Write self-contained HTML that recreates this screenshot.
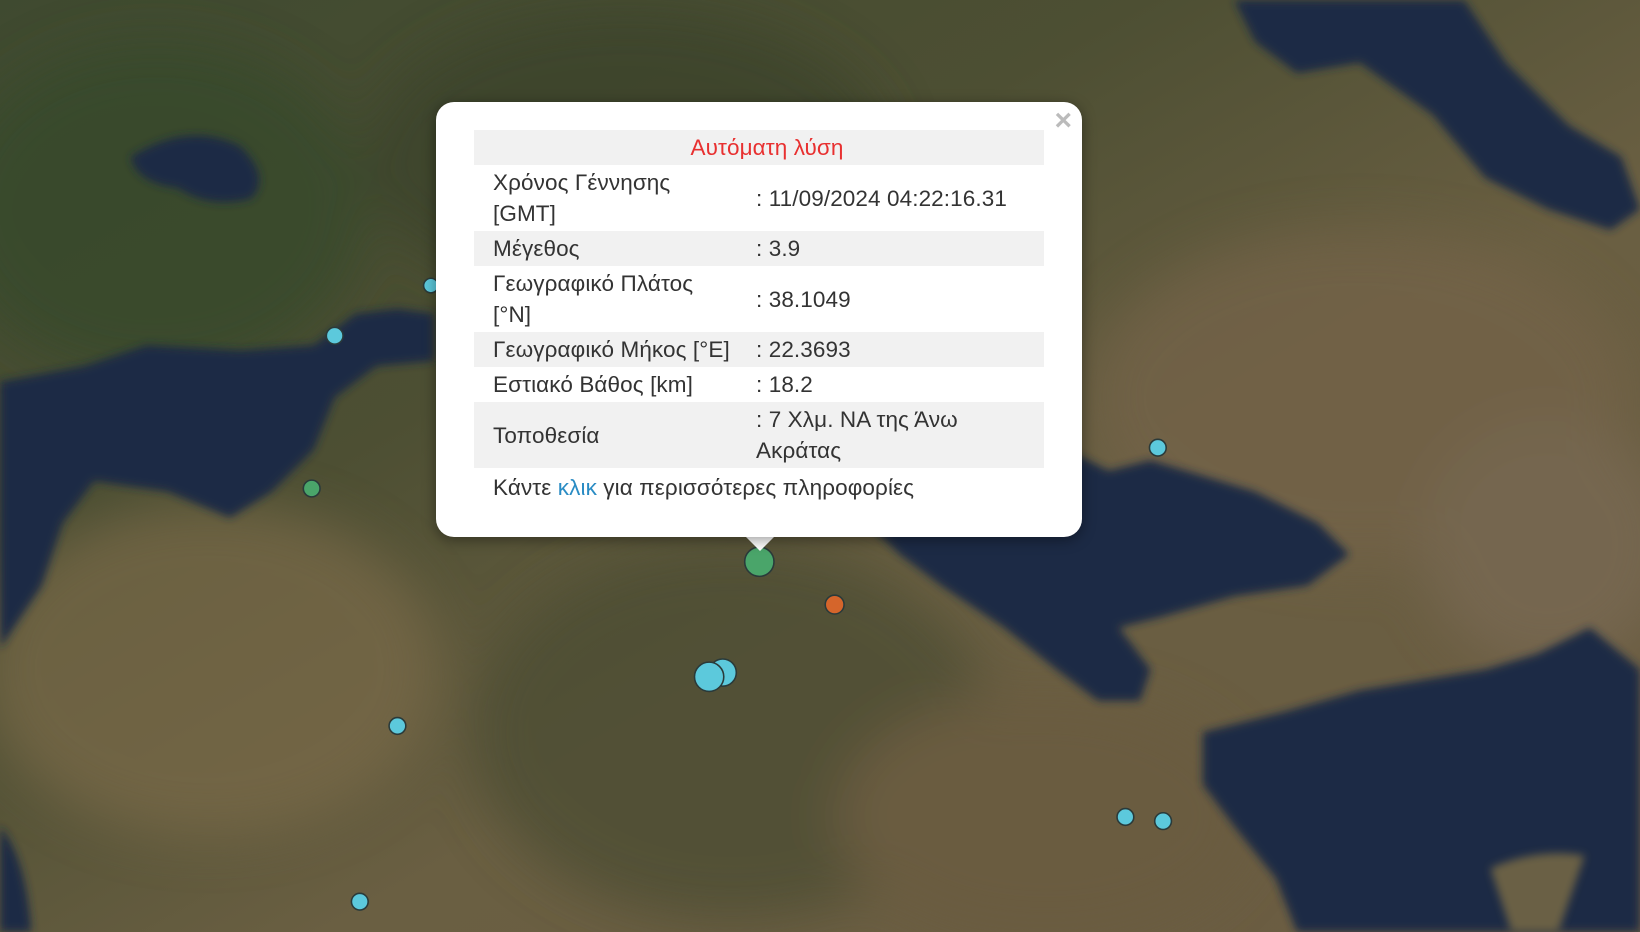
<!DOCTYPE html>
<html><head><meta charset="utf-8"><style>
html,body{margin:0;padding:0;width:1640px;height:932px;overflow:hidden;background:#5b5a3e}
svg.map{position:absolute;left:0;top:0;width:1640px;height:932px}
.pop{position:absolute;left:436px;top:102px;width:646px;height:435px;background:#fff;border-radius:18px;box-shadow:0 3px 14px rgba(0,0,0,.4);font-family:"Liberation Sans",sans-serif;color:#333}
.tip{position:absolute;left:745px;top:536px;width:0;height:0;border-left:15px solid transparent;border-right:15px solid transparent;border-top:15px solid #fff}
.x{position:absolute;right:10px;top:2px;font-size:30px;color:#bbb;font-weight:bold;font-family:"Liberation Sans",sans-serif}
table{position:absolute;left:38px;top:28px;width:570px;border-collapse:collapse;font-size:22.5px;line-height:31px;letter-spacing:0.1px}
td{padding:2px 0 2px 19px;vertical-align:middle}
tr.g td{background:#f1f1f1}
td.v{padding-left:0}
.h td{text-align:center;color:#e83030;height:30px;padding:2px 0 2px 16px}
.f{position:absolute;left:57px;top:373px;font-size:22.5px;letter-spacing:0.1px}
.f span{color:#2a8cc4}
</style></head><body>
<svg class="map" viewBox="0 0 1568 891" preserveAspectRatio="none">
<defs>
<linearGradient id="land" x1="0" y1="0" x2="1" y2="1">
<stop offset="0" stop-color="#3f4a30"/><stop offset=".35" stop-color="#4d4f33"/><stop offset=".6" stop-color="#6a5f42"/><stop offset="1" stop-color="#6b5c42"/></linearGradient>
<filter id="b"><feGaussianBlur stdDeviation="4"/></filter>
<filter id="b2"><feGaussianBlur stdDeviation="25"/></filter>
</defs>
<rect width="1568" height="891" fill="url(#land)"/>
<g filter="url(#b2)" opacity=".7">
<ellipse cx="150" cy="200" rx="200" ry="160" fill="#344a2a"/>
<ellipse cx="600" cy="150" rx="250" ry="140" fill="#3a4329"/>
<ellipse cx="1300" cy="380" rx="260" ry="160" fill="#75634a"/>
<ellipse cx="200" cy="640" rx="220" ry="160" fill="#7a6a4a"/>
<ellipse cx="700" cy="700" rx="250" ry="180" fill="#4a4b30"/>
<ellipse cx="1000" cy="780" rx="200" ry="120" fill="#6b5c40"/>
<ellipse cx="1480" cy="520" rx="120" ry="120" fill="#7a6b55"/>
</g>
<g fill="#1c2c45" filter="url(#b)">
<path d="M0 365 L80 350 L140 330 L230 335 L300 330 L340 300 L380 295 L415 300 L415 345 L360 350 L320 380 L300 430 L260 470 L220 495 L160 470 L90 460 L60 500 L40 560 L0 620 Z"/>
<path d="M830 500 L900 470 L960 440 L1020 430 L1060 450 L1100 440 L1150 455 L1200 470 L1260 500 L1290 530 L1250 560 L1180 570 L1110 590 L1070 600 L1100 640 L1090 670 L1050 670 L1010 640 L960 600 L900 560 L860 530 Z"/>
<path d="M1150 700 L1230 680 L1300 660 L1360 650 L1420 640 L1470 625 L1520 600 L1568 640 L1568 891 L1240 891 L1220 840 L1180 790 L1150 750 Z"/>
<path d="M1180 0 L1400 0 L1440 60 L1500 120 L1550 150 L1568 200 L1540 220 L1480 200 L1420 170 L1370 110 L1300 60 L1240 70 L1200 40 Z"/>
<path d="M125 150 Q180 115 230 140 Q260 170 240 190 Q200 200 170 180 Q130 175 125 150Z"/>
<path d="M0 790 Q25 820 30 891 L0 891Z"/>
</g>
<path d="M1425 830 Q1470 810 1515 818 L1490 891 L1445 891Z" fill="#6b6045" filter="url(#b)"/>
<g stroke="#2a3a3a" stroke-width="1.5">
<circle cx="412" cy="273" r="7" fill="#5cc9dc"/>
<circle cx="320" cy="321" r="8" fill="#5cc9dc"/>
<circle cx="298" cy="467" r="8" fill="#4aa56a"/>
<circle cx="726" cy="537" r="14" fill="#4aa56a"/>
<circle cx="798" cy="578" r="9" fill="#d5652b"/>
<circle cx="691" cy="643" r="13" fill="#5cc9dc"/>
<circle cx="678" cy="647" r="14" fill="#5cc9dc"/>
<circle cx="380" cy="694" r="8" fill="#5cc9dc"/>
<circle cx="1107" cy="428" r="8" fill="#5cc9dc"/>
<circle cx="1076" cy="781" r="8" fill="#5cc9dc"/>
<circle cx="1112" cy="785" r="8" fill="#5cc9dc"/>
<circle cx="344" cy="862" r="8" fill="#5cc9dc"/>
</g>
</svg>
<div class="tip"></div>
<div class="pop">
<div class="x">×</div>
<table>
<tr class="g h"><td colspan="2">Αυτόματη λύση</td></tr>
<tr><td style="width:263px">Χρόνος Γέννησης<br>[GMT]</td><td class="v">: 11/09/2024 04:22:16.31</td></tr>
<tr class="g"><td>Μέγεθος</td><td class="v">: 3.9</td></tr>
<tr><td>Γεωγραφικό Πλάτος<br>[°N]</td><td class="v">: 38.1049</td></tr>
<tr class="g"><td>Γεωγραφικό Μήκος [°E]</td><td class="v">: 22.3693</td></tr>
<tr><td>Εστιακό Βάθος [km]</td><td class="v">: 18.2</td></tr>
<tr class="g"><td>Τοποθεσία</td><td class="v">: 7 Χλμ. ΝΑ της Άνω<br>Ακράτας</td></tr>
</table>
<div class="f">Κάντε <span>κλικ</span> για περισσότερες πληροφορίες</div>
</div>
</body></html>
